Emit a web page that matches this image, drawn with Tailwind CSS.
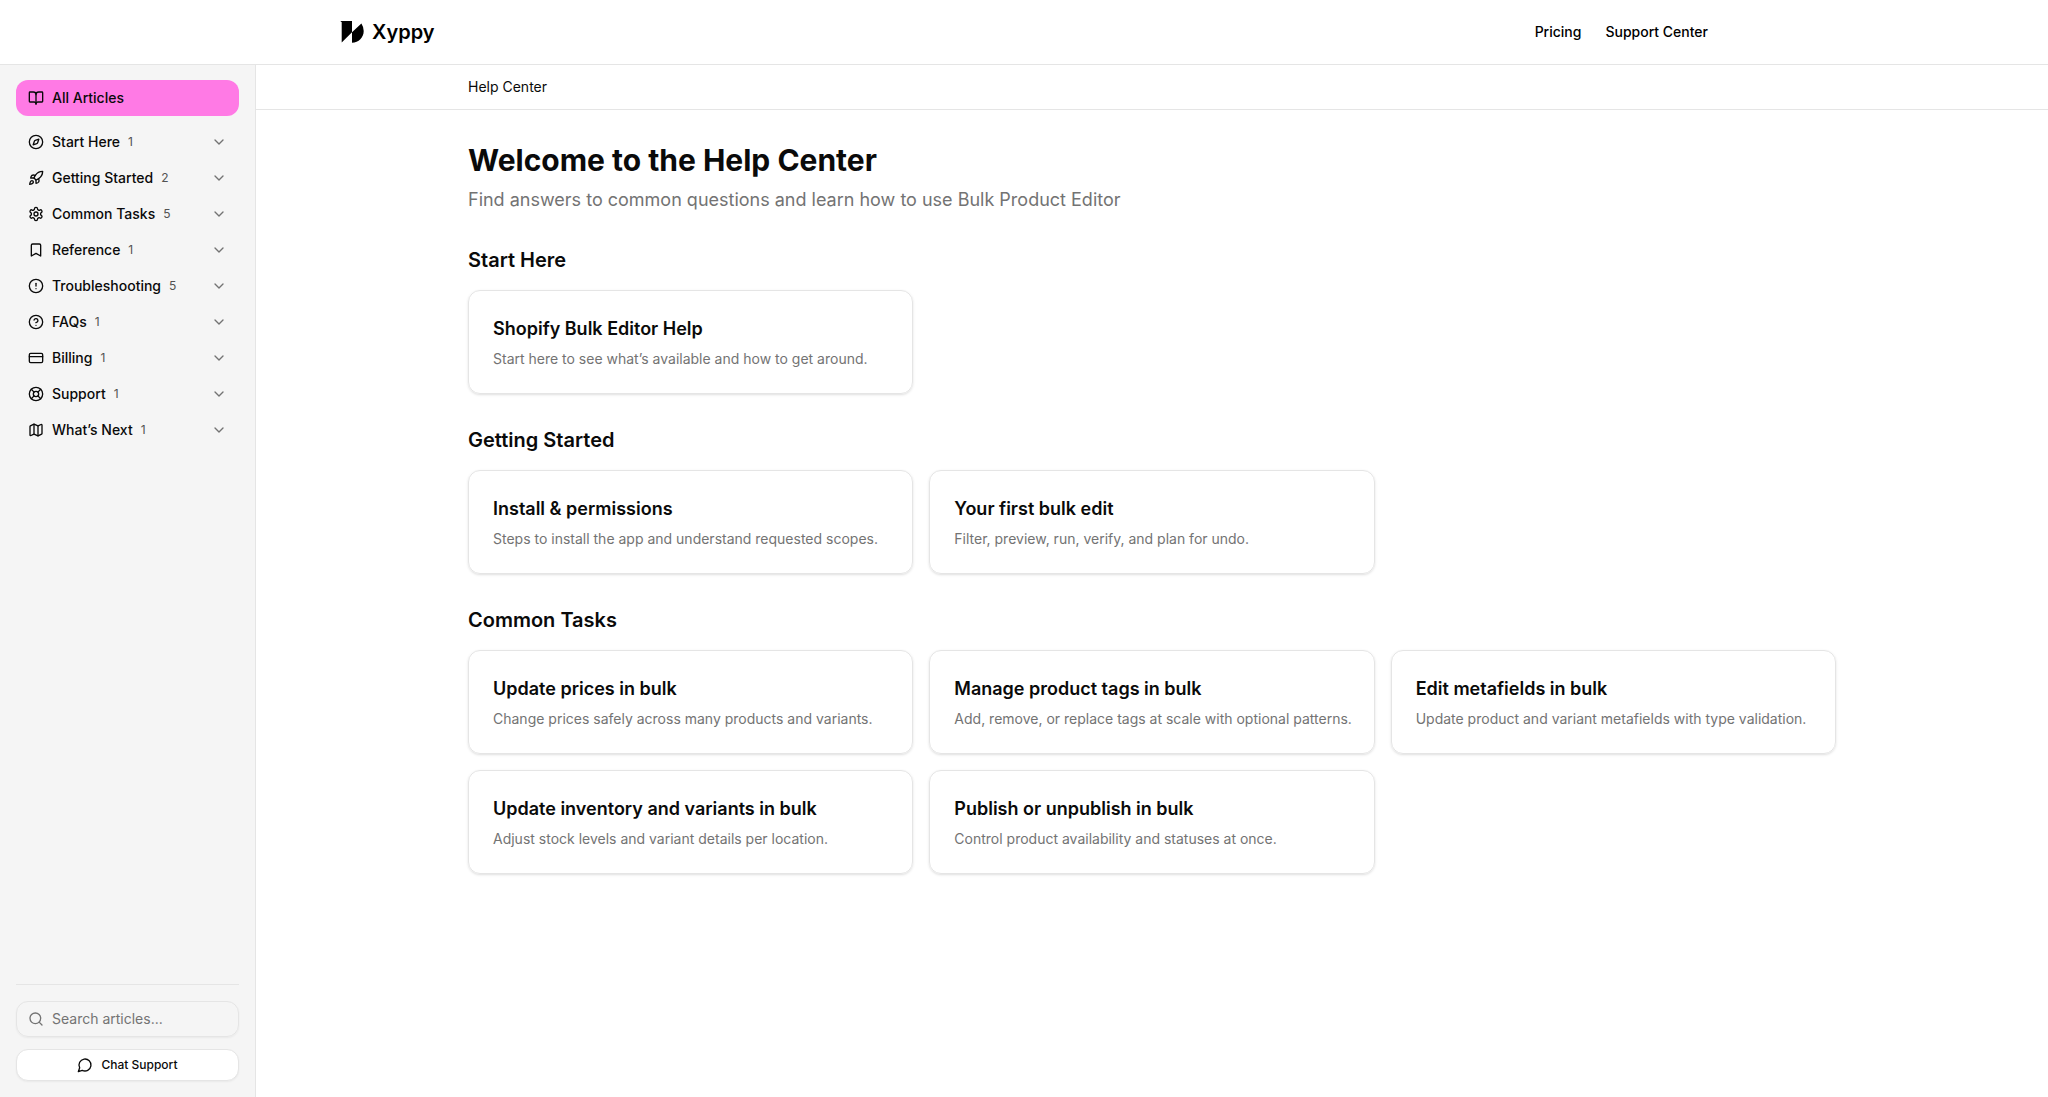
<!DOCTYPE html>
<html lang="en">
<head>
  <meta charset="UTF-8" />
  <meta name="viewport" content="width=device-width, initial-scale=1.0" />
  <title>Help Center | Xyppy</title>
  <script src="https://cdn.jsdelivr.net/npm/@tailwindcss/browser@4"></script>
</head>
<body class="flex min-h-screen flex-col bg-white font-['Inter',sans-serif] text-neutral-950 antialiased">

  <!-- Top bar -->
  <header class="border-b border-neutral-200">
    <div class="mx-auto flex h-16 max-w-[1400px] items-center justify-between px-4">
      <a href="#" class="flex items-center gap-2 text-xl font-semibold text-black">
        <svg class="size-6" viewBox="0 0 24 24" fill="currentColor" aria-hidden="true">
          <path d="M.3 1H12v11.2L1.7 22.6V2.2L.3 1Z" />
          <path d="M12 12.2 21.4 3.6A14 14 0 0 1 23.7 11c0 6.6-5 11.7-11.7 11.7V12.2Z" />
        </svg>
        Xyppy
      </a>
      <nav class="flex items-center gap-6 text-sm font-medium text-black">
        <a href="#">Pricing</a>
        <a href="#">Support Center</a>
      </nav>
    </div>
  </header>

  <div class="flex flex-1">

    <!-- Sidebar -->
    <aside class="flex w-64 shrink-0 flex-col justify-between border-r border-neutral-200 bg-neutral-100 px-4 pt-[15px] pb-4">
      <nav class="text-sm font-medium">
        <a href="#" class="mb-2 flex h-9 items-center gap-2 rounded-xl bg-[#ff7ae5] px-3">
          <svg class="size-4" viewBox="0 0 24 24" fill="none" stroke="currentColor" stroke-width="2" stroke-linecap="round" stroke-linejoin="round"><path d="M12 7v14" /><path d="M3 18a1 1 0 0 1-1-1V4a1 1 0 0 1 1-1h5a4 4 0 0 1 4 4 4 4 0 0 1 4-4h5a1 1 0 0 1 1 1v13a1 1 0 0 1-1 1h-6a3 3 0 0 0-3 3 3 3 0 0 0-3-3z" /></svg>
          All Articles
        </a>
        <button type="button" class="flex h-9 w-full items-center gap-2 px-3">
          <svg class="size-4" viewBox="0 0 24 24" fill="none" stroke="currentColor" stroke-width="2" stroke-linecap="round" stroke-linejoin="round"><path d="m16.24 7.76-1.804 5.411a2 2 0 0 1-1.265 1.265L7.76 16.24l1.804-5.411a2 2 0 0 1 1.265-1.265z" /><circle cx="12" cy="12" r="10" /></svg>
          Start Here
          <span class="text-xs font-normal text-neutral-600">1</span>
          <svg class="ml-auto size-4 text-neutral-500" viewBox="0 0 24 24" fill="none" stroke="currentColor" stroke-width="2" stroke-linecap="round" stroke-linejoin="round"><path d="m6 9 6 6 6-6" /></svg>
        </button>
        <button type="button" class="flex h-9 w-full items-center gap-2 px-3">
          <svg class="size-4" viewBox="0 0 24 24" fill="none" stroke="currentColor" stroke-width="2" stroke-linecap="round" stroke-linejoin="round"><path d="M4.5 16.5c-1.5 1.26-2 5-2 5s3.74-.5 5-2c.71-.84.7-2.13-.09-2.91a2.18 2.18 0 0 0-2.91-.09z" /><path d="m12 15-3-3a22 22 0 0 1 2-3.95A12.88 12.88 0 0 1 22 2c0 2.72-.78 7.5-6 11a22.35 22.35 0 0 1-4 2z" /><path d="M9 12H4s.55-3.03 2-4c1.62-1.08 5 0 5 0" /><path d="M12 15v5s3.03-.55 4-2c1.08-1.62 0-5 0-5" /></svg>
          Getting Started
          <span class="text-xs font-normal text-neutral-600">2</span>
          <svg class="ml-auto size-4 text-neutral-500" viewBox="0 0 24 24" fill="none" stroke="currentColor" stroke-width="2" stroke-linecap="round" stroke-linejoin="round"><path d="m6 9 6 6 6-6" /></svg>
        </button>
        <button type="button" class="flex h-9 w-full items-center gap-2 px-3">
          <svg class="size-4" viewBox="0 0 24 24" fill="none" stroke="currentColor" stroke-width="2" stroke-linecap="round" stroke-linejoin="round"><path d="M12.22 2h-.44a2 2 0 0 0-2 2v.18a2 2 0 0 1-1 1.73l-.43.25a2 2 0 0 1-2 0l-.15-.08a2 2 0 0 0-2.73.73l-.22.38a2 2 0 0 0 .73 2.73l.15.1a2 2 0 0 1 1 1.72v.51a2 2 0 0 1-1 1.74l-.15.09a2 2 0 0 0-.73 2.73l.22.38a2 2 0 0 0 2.73.73l.15-.08a2 2 0 0 1 2 0l.43.25a2 2 0 0 1 1 1.73V20a2 2 0 0 0 2 2h.44a2 2 0 0 0 2-2v-.18a2 2 0 0 1 1-1.73l.43-.25a2 2 0 0 1 2 0l.15.08a2 2 0 0 0 2.73-.73l.22-.39a2 2 0 0 0-.73-2.73l-.15-.08a2 2 0 0 1-1-1.74v-.5a2 2 0 0 1 1-1.74l.15-.09a2 2 0 0 0 .73-2.73l-.22-.38a2 2 0 0 0-2.73-.73l-.15.08a2 2 0 0 1-2 0l-.43-.25a2 2 0 0 1-1-1.73V4a2 2 0 0 0-2-2z" /><circle cx="12" cy="12" r="3" /></svg>
          Common Tasks
          <span class="text-xs font-normal text-neutral-600">5</span>
          <svg class="ml-auto size-4 text-neutral-500" viewBox="0 0 24 24" fill="none" stroke="currentColor" stroke-width="2" stroke-linecap="round" stroke-linejoin="round"><path d="m6 9 6 6 6-6" /></svg>
        </button>
        <button type="button" class="flex h-9 w-full items-center gap-2 px-3">
          <svg class="size-4" viewBox="0 0 24 24" fill="none" stroke="currentColor" stroke-width="2" stroke-linecap="round" stroke-linejoin="round"><path d="m19 21-7-4-7 4V5a2 2 0 0 1 2-2h10a2 2 0 0 1 2 2v16z" /></svg>
          Reference
          <span class="text-xs font-normal text-neutral-600">1</span>
          <svg class="ml-auto size-4 text-neutral-500" viewBox="0 0 24 24" fill="none" stroke="currentColor" stroke-width="2" stroke-linecap="round" stroke-linejoin="round"><path d="m6 9 6 6 6-6" /></svg>
        </button>
        <button type="button" class="flex h-9 w-full items-center gap-2 px-3">
          <svg class="size-4" viewBox="0 0 24 24" fill="none" stroke="currentColor" stroke-width="2" stroke-linecap="round" stroke-linejoin="round"><circle cx="12" cy="12" r="10" /><path d="M12 8v4" /><path d="M12 16h.01" /></svg>
          Troubleshooting
          <span class="text-xs font-normal text-neutral-600">5</span>
          <svg class="ml-auto size-4 text-neutral-500" viewBox="0 0 24 24" fill="none" stroke="currentColor" stroke-width="2" stroke-linecap="round" stroke-linejoin="round"><path d="m6 9 6 6 6-6" /></svg>
        </button>
        <button type="button" class="flex h-9 w-full items-center gap-2 px-3">
          <svg class="size-4" viewBox="0 0 24 24" fill="none" stroke="currentColor" stroke-width="2" stroke-linecap="round" stroke-linejoin="round"><circle cx="12" cy="12" r="10" /><path d="M9.09 9a3 3 0 0 1 5.83 1c0 2-3 3-3 3" /><path d="M12 17h.01" /></svg>
          FAQs
          <span class="text-xs font-normal text-neutral-600">1</span>
          <svg class="ml-auto size-4 text-neutral-500" viewBox="0 0 24 24" fill="none" stroke="currentColor" stroke-width="2" stroke-linecap="round" stroke-linejoin="round"><path d="m6 9 6 6 6-6" /></svg>
        </button>
        <button type="button" class="flex h-9 w-full items-center gap-2 px-3">
          <svg class="size-4" viewBox="0 0 24 24" fill="none" stroke="currentColor" stroke-width="2" stroke-linecap="round" stroke-linejoin="round"><rect width="20" height="14" x="2" y="5" rx="2" /><path d="M2 10h20" /></svg>
          Billing
          <span class="text-xs font-normal text-neutral-600">1</span>
          <svg class="ml-auto size-4 text-neutral-500" viewBox="0 0 24 24" fill="none" stroke="currentColor" stroke-width="2" stroke-linecap="round" stroke-linejoin="round"><path d="m6 9 6 6 6-6" /></svg>
        </button>
        <button type="button" class="flex h-9 w-full items-center gap-2 px-3">
          <svg class="size-4" viewBox="0 0 24 24" fill="none" stroke="currentColor" stroke-width="2" stroke-linecap="round" stroke-linejoin="round"><circle cx="12" cy="12" r="10" /><path d="m4.93 4.93 4.24 4.24" /><path d="m14.83 9.17 4.24-4.24" /><path d="m14.83 14.83 4.24 4.24" /><path d="m9.17 14.83-4.24 4.24" /><circle cx="12" cy="12" r="4" /></svg>
          Support
          <span class="text-xs font-normal text-neutral-600">1</span>
          <svg class="ml-auto size-4 text-neutral-500" viewBox="0 0 24 24" fill="none" stroke="currentColor" stroke-width="2" stroke-linecap="round" stroke-linejoin="round"><path d="m6 9 6 6 6-6" /></svg>
        </button>
        <button type="button" class="flex h-9 w-full items-center gap-2 px-3">
          <svg class="size-4" viewBox="0 0 24 24" fill="none" stroke="currentColor" stroke-width="2" stroke-linecap="round" stroke-linejoin="round"><path d="M14.106 5.553a2 2 0 0 0 1.788 0l3.659-1.83A1 1 0 0 1 21 4.619v12.764a1 1 0 0 1-.553.894l-4.553 2.277a2 2 0 0 1-1.788 0l-4.212-2.106a2 2 0 0 0-1.788 0l-3.659 1.83A1 1 0 0 1 3 19.381V6.618a1 1 0 0 1 .553-.894l4.553-2.277a2 2 0 0 1 1.788 0z" /><path d="M15 5.764v15" /><path d="M9 3.236v15" /></svg>
          What’s Next
          <span class="text-xs font-normal text-neutral-600">1</span>
          <svg class="ml-auto size-4 text-neutral-500" viewBox="0 0 24 24" fill="none" stroke="currentColor" stroke-width="2" stroke-linecap="round" stroke-linejoin="round"><path d="m6 9 6 6 6-6" /></svg>
        </button>
      </nav>

      <div class="flex flex-col gap-3 border-t border-neutral-200 pt-4">
        <label class="flex h-9 items-center gap-2 rounded-xl border border-neutral-200 px-[11px] text-neutral-500 shadow-xs">
          <svg class="size-4 shrink-0" viewBox="0 0 24 24" fill="none" stroke="currentColor" stroke-width="2" stroke-linecap="round" stroke-linejoin="round"><circle cx="11" cy="11" r="8" /><path d="m21 21-4.3-4.3" /></svg>
          <input type="search" aria-label="Search articles" placeholder="Search articles..." class="w-full min-w-0 bg-transparent text-sm text-neutral-950 outline-none placeholder:text-neutral-500" />
        </label>
        <button type="button" class="flex h-8 items-center justify-center gap-2 rounded-xl border border-neutral-200 bg-white text-xs font-medium shadow-xs">
          <svg class="size-4" viewBox="0 0 24 24" fill="none" stroke="currentColor" stroke-width="2" stroke-linecap="round" stroke-linejoin="round"><path d="M7.9 20A9 9 0 1 0 4 16.1L2 22Z" /></svg>
          Chat Support
        </button>
      </div>
    </aside>

    <!-- Content -->
    <div class="min-w-0 flex-1">
      <div class="border-b border-neutral-200">
        <nav aria-label="Breadcrumb" class="mx-auto flex h-11 max-w-[1400px] items-center px-4 text-sm">
          <a href="#">Help Center</a>
        </nav>
      </div>

      <main class="mx-auto flex max-w-[1400px] flex-col gap-8 px-4 py-8">
        <div>
          <h1 class="mb-2 text-3xl font-bold">Welcome to the Help Center</h1>
          <p class="text-lg text-neutral-500">Find answers to common questions and learn how to use Bulk Product Editor</p>
        </div>

        <section>
          <h2 class="mb-4 text-xl font-semibold">Start Here</h2>
          <div class="grid grid-cols-3 gap-4">
            <a href="#" class="rounded-xl border border-neutral-200 p-6 shadow-sm">
              <h3 class="mb-1.5 text-lg font-semibold">Shopify Bulk Editor Help</h3>
              <p class="text-sm whitespace-nowrap text-neutral-500">Start here to see what’s available and how to get around.</p>
            </a>
          </div>
        </section>

        <section>
          <h2 class="mb-4 text-xl font-semibold">Getting Started</h2>
          <div class="grid grid-cols-3 gap-4">
            <a href="#" class="rounded-xl border border-neutral-200 p-6 shadow-sm">
              <h3 class="mb-1.5 text-lg font-semibold">Install &amp; permissions</h3>
              <p class="text-sm whitespace-nowrap text-neutral-500">Steps to install the app and understand requested scopes.</p>
            </a>
            <a href="#" class="rounded-xl border border-neutral-200 p-6 shadow-sm">
              <h3 class="mb-1.5 text-lg font-semibold">Your first bulk edit</h3>
              <p class="text-sm whitespace-nowrap text-neutral-500">Filter, preview, run, verify, and plan for undo.</p>
            </a>
          </div>
        </section>

        <section>
          <h2 class="mb-4 text-xl font-semibold">Common Tasks</h2>
          <div class="grid grid-cols-3 gap-4">
            <a href="#" class="rounded-xl border border-neutral-200 p-6 shadow-sm">
              <h3 class="mb-1.5 text-lg font-semibold">Update prices in bulk</h3>
              <p class="text-sm whitespace-nowrap text-neutral-500">Change prices safely across many products and variants.</p>
            </a>
            <a href="#" class="rounded-xl border border-neutral-200 p-6 shadow-sm">
              <h3 class="mb-1.5 text-lg font-semibold">Manage product tags in bulk</h3>
              <p class="text-sm whitespace-nowrap text-neutral-500">Add, remove, or replace tags at scale with optional patterns.</p>
            </a>
            <a href="#" class="rounded-xl border border-neutral-200 p-6 shadow-sm">
              <h3 class="mb-1.5 text-lg font-semibold">Edit metafields in bulk</h3>
              <p class="text-sm whitespace-nowrap text-neutral-500">Update product and variant metafields with type validation.</p>
            </a>
            <a href="#" class="rounded-xl border border-neutral-200 p-6 shadow-sm">
              <h3 class="mb-1.5 text-lg font-semibold">Update inventory and variants in bulk</h3>
              <p class="text-sm whitespace-nowrap text-neutral-500">Adjust stock levels and variant details per location.</p>
            </a>
            <a href="#" class="rounded-xl border border-neutral-200 p-6 shadow-sm">
              <h3 class="mb-1.5 text-lg font-semibold">Publish or unpublish in bulk</h3>
              <p class="text-sm whitespace-nowrap text-neutral-500">Control product availability and statuses at once.</p>
            </a>
          </div>
        </section>
      </main>
    </div>
  </div>

</body>
</html>
